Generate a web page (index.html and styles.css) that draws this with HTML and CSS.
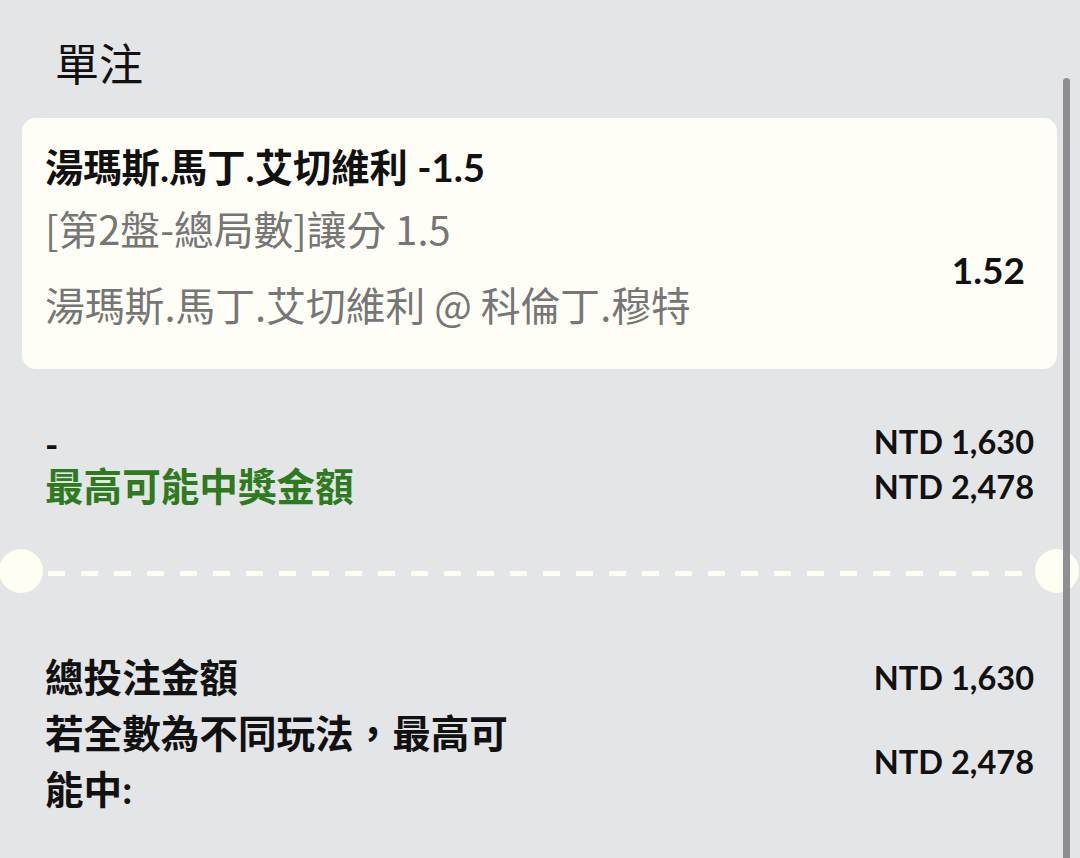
FILE: index.html
```html
<!DOCTYPE html>
<html lang="zh-Hant">
<head>
    <meta charset="UTF-8">
    <meta name="viewport" content="width=device-width, initial-scale=1.0">
    <title>單注</title>
    <link rel="stylesheet" href="styles.css">
</head>
<body>
    <div class="sheet">
        <h2 class="sheet-title">單注</h2>

        <div class="bet-card">
            <div class="bet-info">
                <div class="bet-name">湯瑪斯.馬丁.艾切維利 -1.5</div>
                <div class="bet-market">[第2盤-總局數]讓分 1.5</div>
                <div class="bet-event">湯瑪斯.馬丁.艾切維利 @ 科倫丁.穆特</div>
            </div>
            <div class="bet-odds">1.52</div>
        </div>

        <div class="stake-row">
            <div class="stake-labels">
                <div class="stake-input">-</div>
                <div class="win-label">最高可能中獎金額</div>
            </div>
            <div class="stake-values">
                <div>NTD 1,630</div>
                <div>NTD 2,478</div>
            </div>
        </div>

        <div class="divider">
            <span class="notch notch-left"></span>
            <span class="dash-line"></span>
            <span class="notch notch-right"></span>
        </div>

        <div class="summary">
            <div class="summary-row">
                <div class="summary-label">總投注金額</div>
                <div class="summary-value">NTD 1,630</div>
            </div>
            <div class="summary-row">
                <div class="summary-label">若全數為不同玩法，最高可能中:</div>
                <div class="summary-value">NTD 2,478</div>
            </div>
        </div>

        <!-- overlay scrollbar -->
        <div class="scrollbar"></div>
    </div>
</body>
</html>
```

FILE: styles.css
```css
body {
    margin: 0;
    padding: 0;
    background-color: #e4e5e7;
    font-family: "Lato", "Noto Sans CJK TC", sans-serif;
    color: #111;
}

.sheet {
    position: relative;
    width: 1080px;
    height: 858px;
    overflow: hidden;
}

.sheet-title {
    margin: 0;
    padding: 36px 0 0 55px;
    font-family: "Noto Sans CJK TC", sans-serif;
    font-size: 44px;
    font-weight: 400;
    line-height: 52px;
}

.bet-card {
    display: flex;
    justify-content: space-between;
    margin: 30px 23px 0 22px;
    padding: 24px 32px 35px 23px;
    background-color: #fffef6;
    border-radius: 14px;
}

.bet-name {
    font-size: 38.3px;
    font-weight: 700;
    line-height: 50px;
}

.bet-market,
.bet-event {
    font-family: "Noto Sans CJK TC", sans-serif;
    font-size: 39.8px;
    line-height: 60px;
    color: #767676;
}

.bet-market {
    margin-top: 6px;
}

.bet-event {
    margin-top: 16px;
}

.bet-odds {
    align-self: center;
    margin-top: 64px;
    font-size: 37px;
    font-weight: 700;
    line-height: 44px;
}

.stake-row {
    display: flex;
    justify-content: space-between;
    margin-top: 50px;
    padding: 0 46px 0 45px;
    line-height: 45px;
    font-weight: 700;
}

.stake-input {
    font-size: 36px;
    transform: translateY(3px);
}

.win-label {
    font-size: 38.6px;
    color: #2e7a1f;
}

.stake-values {
    font-size: 32.5px;
    text-align: right;
}

.divider {
    display: flex;
    align-items: center;
    margin-top: 40px;
    height: 44px;
}

.notch {
    width: 44px;
    height: 44px;
    border-radius: 50%;
    background-color: #fffef2;
    flex-shrink: 0;
}

.notch-left {
    margin-left: -1px;
}

.notch-right {
    margin-right: 1px;
}

.dash-line {
    flex: 1;
    height: 5px;
    margin: 5px 4px 0 5px;
    background: repeating-linear-gradient(to right, #fffef2 0 17px, transparent 17px 33px);
}

.summary {
    margin-top: 56px;
    padding: 0 46px 0 45px;
}

.summary-row {
    display: flex;
    justify-content: space-between;
    align-items: center;
}

.summary-label {
    max-width: 490px;
    font-size: 38.6px;
    font-weight: 700;
    line-height: 56px;
}

.summary-value {
    font-size: 32.5px;
    font-weight: 700;
}

.scrollbar {
    position: absolute;
    left: 1063px;
    top: 78px;
    bottom: 0;
    width: 7px;
    background-color: #8f8f93;
    border-radius: 4px 4px 0 0;
}
```
